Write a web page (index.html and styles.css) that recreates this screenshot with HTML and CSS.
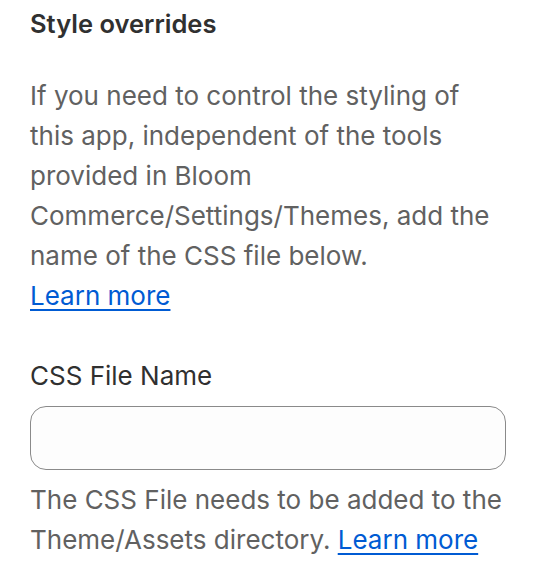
FILE: index.html
```html
<!DOCTYPE html>
<html lang="en">
<head>
<meta charset="utf-8">
<link rel="stylesheet" href="styles.css">
</head>
<body>
<div class="panel">
  <h2 class="title">Style overrides</h2>
  <p class="desc">If you need to control the styling of this app, independent of the tools provided in Bloom Commerce/Settings/Themes, add the name of the CSS file below.</p>
  <a href="#" class="link link-block">Learn more</a>
  <div class="field">
    <label class="label" for="css">CSS File Name</label>
    <input class="input" id="css" type="text">
    <p class="help">The CSS File needs to be added to the Theme/Assets directory. <a href="#" class="link">Learn more</a></p>
  </div>
</div>
</body>
</html>
```
FILE: styles.css
```css
html, body { margin: 0; padding: 0; background: #ffffff; }
body { font-family: Inter, "Noto Sans", sans-serif; -webkit-font-smoothing: antialiased; }
.panel { padding: 4px 32px 0 30px; display: flex; flex-direction: column; align-items: flex-start; }
.title { margin: 0; font-size: 25.5px; line-height: 40px; font-weight: 600; color: #303030; }
.desc { margin: 32px 0 0; font-size: 26px; line-height: 40px; color: #616161; }
.link { color: #005bd3; text-decoration: underline; text-underline-offset: 4px; text-decoration-thickness: 2px; font-size: 26px; line-height: 40px; }
.field { margin-top: 40px; display: flex; flex-direction: column; align-self: stretch; }
.label { font-size: 26px; line-height: 40px; color: #303030; }
.input { margin-top: 10px; height: 64px; box-sizing: border-box; border: 1.5px solid #8a8a8a; border-radius: 16px; background: #fdfdfd; padding: 0 24px; font: inherit; font-size: 26px; }
.help { margin: 10px 0 0; font-size: 26px; line-height: 40px; color: #616161; }
```
